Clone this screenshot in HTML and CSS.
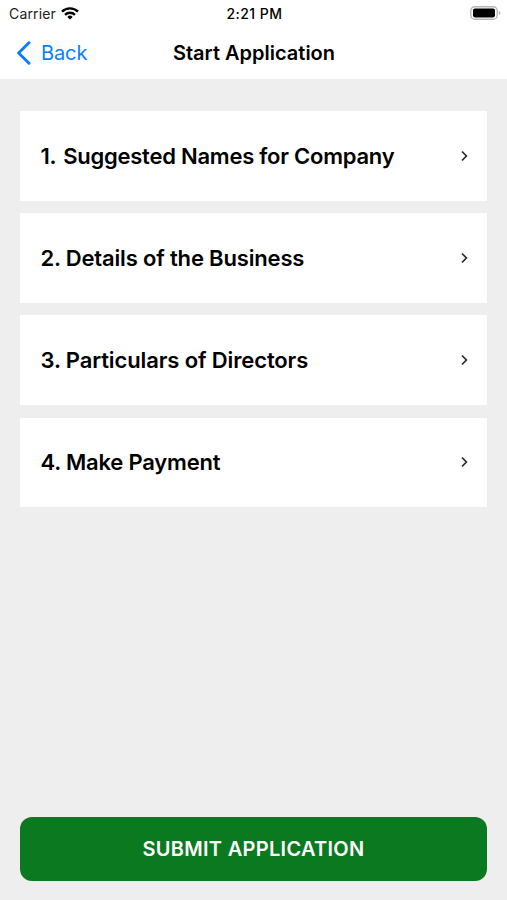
FILE: index.html
```html
<!DOCTYPE html>
<html lang="en">
<head>
<meta charset="utf-8">
<title>Start Application</title>
<link rel="stylesheet" href="styles.css">
</head>
<body>
<header class="header">
  <div class="status">
    <div class="carrier"><span class="carrier-name">Carrier</span>
      <svg class="wifi" width="18" height="13" viewBox="0 0 18 13" fill="none" stroke="#000" stroke-width="2.4"><path d="M1 4.6a11.5 11.5 0 0 1 16 0M4 7.8a7.2 7.2 0 0 1 10 0"/><path d="M9 12.6 6.3 9.9a3.9 3.9 0 0 1 5.4 0z" fill="#000" stroke="none"/></svg>
    </div>
    <time class="time">2:21 PM</time>
    <svg class="battery" width="31" height="14" viewBox="0 0 31 14"><rect x=".8" y=".8" width="26.4" height="12.4" rx="3.8" fill="none" stroke="#b5b5b5" stroke-width="1.4"/><rect x="3" y="2.6" width="22" height="8.8" rx="1.8"/><path d="M28.8 4.7v4.6q1.7-.8 1.7-2.3t-1.7-2.3z" fill="#b5b5b5"/></svg>
  </div>
  <nav class="nav">
    <a class="back"><svg width="15" height="24" viewBox="0 0 15 24" fill="none" stroke="#087eff" stroke-width="2.9" stroke-linecap="round" stroke-linejoin="round"><path d="M13 1.8 2.6 12 13 22.2"/></svg><span class="back-label">Back</span></a>
    <h1 class="title">Start Application</h1>
  </nav>
</header>
<main class="steps">
  <a class="step"><span class="label names"><span class="number">1.</span> Suggested Names for Company</span><svg class="chevron" viewBox="0 0 8 12"><path d="M2 1.5 6.4 6 2 10.5"/></svg></a>
  <a class="step"><span class="label business">2. Details of the Business</span><svg class="chevron" viewBox="0 0 8 12"><path d="M2 1.5 6.4 6 2 10.5"/></svg></a>
  <a class="step"><span class="label directors">3. Particulars of Directors</span><svg class="chevron" viewBox="0 0 8 12"><path d="M2 1.5 6.4 6 2 10.5"/></svg></a>
  <a class="step"><span class="label payment">4. Make Payment</span><svg class="chevron" viewBox="0 0 8 12"><path d="M2 1.5 6.4 6 2 10.5"/></svg></a>
</main>
<footer class="footer"><button class="submit">SUBMIT APPLICATION</button></footer>
</body>
</html>
```
FILE: styles.css
```css
* { box-sizing: border-box; }
body { margin: 0; height: 900px; display: flex; flex-direction: column; background: #eee; color: #000; font-family: Inter, "Liberation Sans", sans-serif; overflow: hidden; }
.header { height: 79px; background: #fff; flex: none; }
.status { height: 27px; padding: 0 6px 0 9px; display: grid; grid-template-columns: 1fr auto 1fr; align-items: center; font-size: 14px; }
.carrier { display: flex; align-items: center; gap: 5.5px; color: #222; }
.carrier-name { letter-spacing: .15px; }
.wifi { margin-top: -1px; }
.time { font-weight: 500; font-size: 14px; letter-spacing: .45px; margin-left: -1px; }
.battery { justify-self: end; margin-top: -1px; }
.nav { height: 51px; padding: 0 16px; display: grid; grid-template-columns: 1fr auto 1fr; align-items: center; }
.back { display: flex; align-items: center; gap: 10px; color: #087eff; font-size: 20px; }
.back-label { letter-spacing: -.1px; }
.title { margin: 0; font-size: 20px; font-weight: 600; letter-spacing: 0; padding-left: 1px; }
.steps { padding: 32px 20px 0; display: flex; flex-direction: column; gap: 12.4px; }
.step { height: 89.8px; padding: 0 19px 0 20.5px; background: #fff; display: flex; align-items: center; justify-content: space-between; font-size: 22px; font-weight: 640; }
.names { letter-spacing: -.24px; }
.number { margin-right: 1.5px; }
.business { letter-spacing: -.17px; }
.directors { letter-spacing: -.12px; }
.payment { letter-spacing: -.2px; }
.chevron { width: 8px; height: 12px; fill: none; stroke: #2a2a2a; stroke-width: 1.7; }
.footer { margin-top: auto; padding: 0 20px 19.5px; display: flex; }
.submit { width: 100%; height: 64px; padding: 0; border: 0; border-radius: 12px; background: #0b791f; color: #fff; font: 600 20px Inter, "Liberation Sans", sans-serif; letter-spacing: .3px; }
```
